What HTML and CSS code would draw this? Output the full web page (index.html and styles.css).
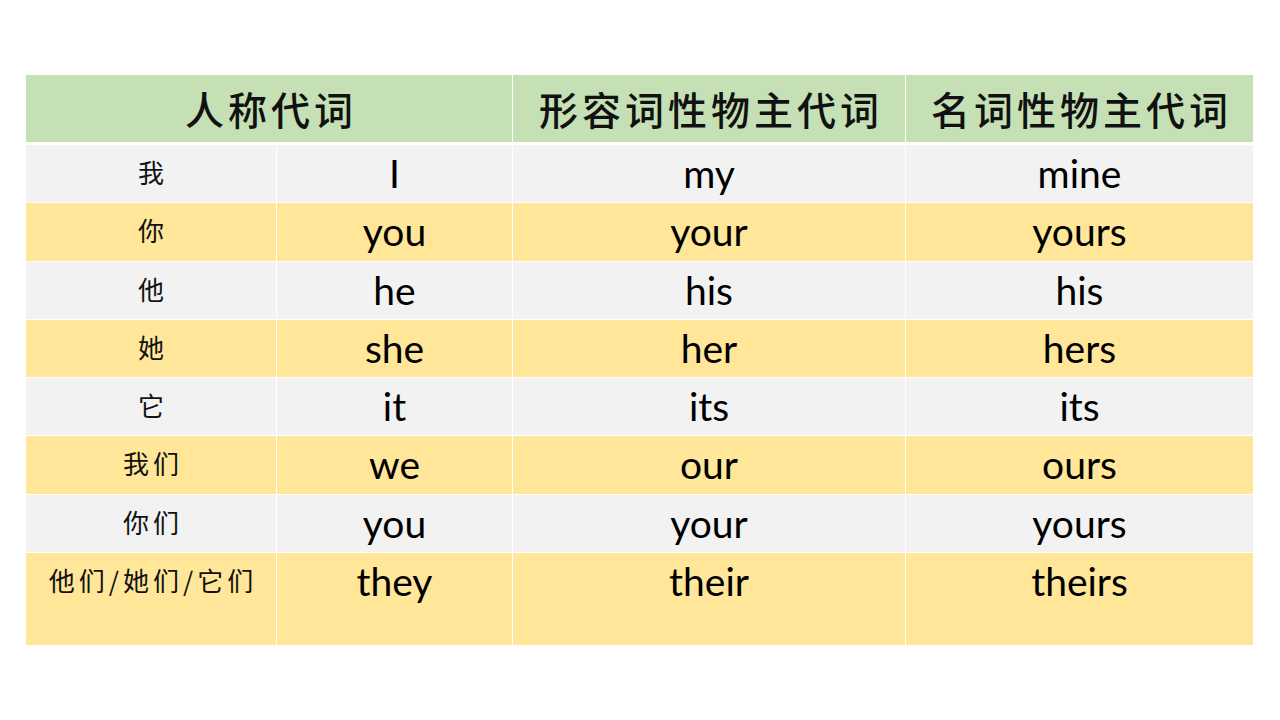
FILE: index.html
```html
<!DOCTYPE html>
<html lang="zh">
<head>
<meta charset="utf-8">
<link rel="stylesheet" href="styles.css">
<title>人称代词</title>
</head>
<body>
<div class="page">
<table class="pron">
  <colgroup>
    <col class="c1"><col class="c2"><col class="c3"><col class="c4">
  </colgroup>
  <thead>
    <tr>
      <th colspan="2">人称代词</th>
      <th>形容词性物主代词</th>
      <th>名词性物主代词</th>
    </tr>
  </thead>
  <tbody>
    <tr class="gray"><td class="zh">我</td><td>I</td><td>my</td><td>mine</td></tr>
    <tr class="yellow"><td class="zh">你</td><td>you</td><td>your</td><td>yours</td></tr>
    <tr class="gray"><td class="zh">他</td><td>he</td><td>his</td><td>his</td></tr>
    <tr class="yellow"><td class="zh">她</td><td>she</td><td>her</td><td>hers</td></tr>
    <tr class="gray"><td class="zh">它</td><td>it</td><td>its</td><td>its</td></tr>
    <tr class="yellow"><td class="zh">我们</td><td>we</td><td>our</td><td>ours</td></tr>
    <tr class="gray"><td class="zh">你们</td><td>you</td><td>your</td><td>yours</td></tr>
    <tr class="yellow last"><td class="zh">他们/她们/它们</td><td>they</td><td>their</td><td>theirs</td></tr>
  </tbody>
</table>
</div>
</body>
</html>
```
FILE: styles.css
```css
html, body {
  margin: 0;
  padding: 0;
  background: #ffffff;
}
.page {
  width: 1280px;
  height: 720px;
  padding: 75px 0 0 26px;
  box-sizing: border-box;
}
.pron {
  border-collapse: separate;
  border-spacing: 0;
  table-layout: fixed;
  width: 1227px;
}
.c1 { width: 251px; }
.c2 { width: 236px; }
.c3 { width: 393px; }
.c4 { width: 347px; }

.pron th {
  background: #c5e0b4;
  height: 67px;
  padding: 0;
  border-right: 1px solid #ffffff;
  border-bottom: 3px solid #ffffff;
  font-family: "Noto Sans CJK SC", "Noto Sans", sans-serif;
  font-weight: 500;
  font-size: 39px;
  letter-spacing: 4px;
  text-indent: 4px;
  color: #111111;
  text-align: center;
  vertical-align: middle;
  line-height: 67px;
  box-sizing: content-box;
}
.pron th:last-child,
.pron td:last-child { border-right: none; }

.pron td {
  height: 57.3px;
  padding: 0;
  border-right: 1px solid #ffffff;
  border-bottom: 1px solid #ffffff;
  font-family: Lato, "Liberation Sans", sans-serif;
  font-size: 39px;
  line-height: 57px;
  color: #000000;
  text-align: center;
  vertical-align: top;
  box-sizing: content-box;
}
.pron td.zh {
  font-family: "Noto Sans CJK SC", "Noto Sans", sans-serif;
  font-size: 26px;
  letter-spacing: 4px;
  text-indent: 4px;
  line-height: 54px;
  color: #111111;
}
.pron tr.last td { height: 92px; border-bottom: none; }
.gray td { background: #f2f2f2; }
.yellow td { background: #ffe699; }
```
